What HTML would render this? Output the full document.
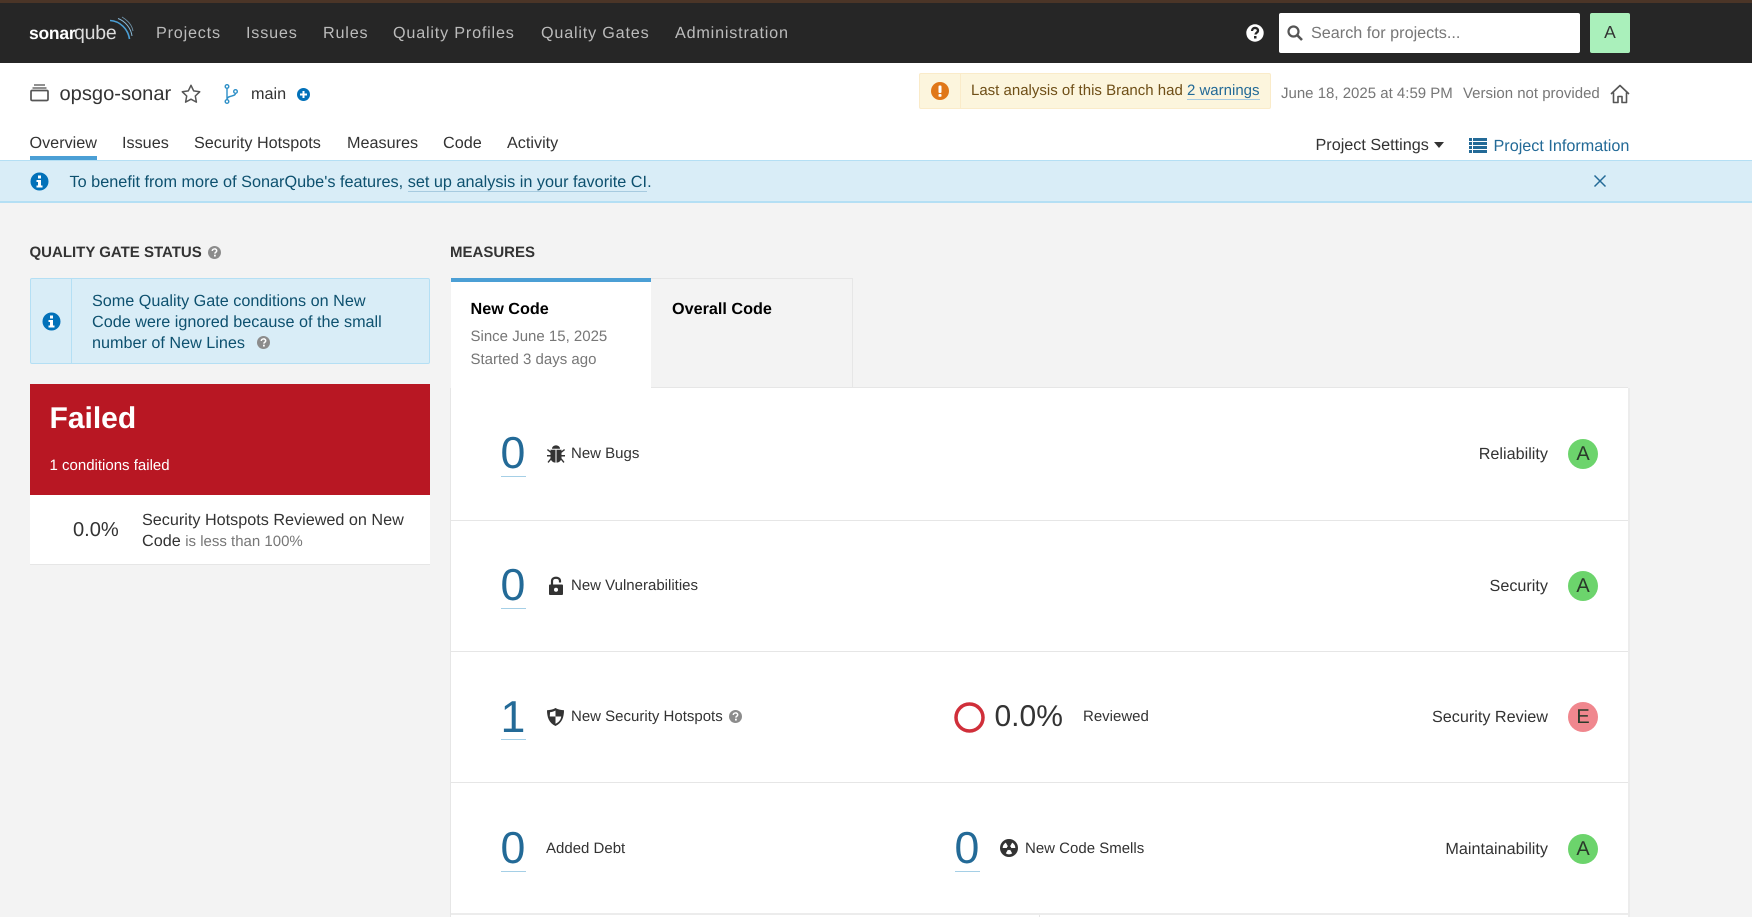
<!DOCTYPE html>
<html lang="en"><head><meta charset="utf-8"><title>opsgo-sonar</title>
<style>
html,body{margin:0;padding:0;width:1752px;height:917px;overflow:hidden;background:#f3f3f3}
body{position:relative;font-family:"Liberation Sans",sans-serif;color:#333;text-rendering:geometricPrecision}
.b{position:absolute;box-sizing:border-box}
.t{position:absolute;white-space:nowrap;line-height:24px;height:24px;font-size:16.2px}
.nav{color:#bbb;letter-spacing:.8px;top:21px;font-size:16.2px}
.tab{top:131px}
.u{border-bottom:1px solid #a7cbe0}
.num{font-size:44.7px;line-height:50px;height:50px;color:#236a97}
.ul{position:absolute;height:1px;width:25px;background:#a5cfe6}
.m{font-size:15px}
.rate{position:absolute;width:30px;height:30px;border-radius:50%;background:#6cd46c;left:1568px;text-align:center;line-height:30px;font-size:20px;color:#2a3a2a}
.h{position:absolute;background:#e6e6e6;height:1px;left:451px;width:1177px}
svg{position:absolute;overflow:visible}
</style></head><body>
<div class="b" style="left:0;top:0;width:1752px;height:3px;background:#4b3527"></div>
<div class="b" style="left:0;top:3px;width:1752px;height:60px;background:#262626"></div>
<div class="b" style="left:0;top:63px;width:1752px;height:97px;background:#fff"></div>

<!-- logo -->
<div class="t" style="left:29px;top:21px;font-size:17.5px;font-weight:bold;color:#fff;letter-spacing:-.25px">sonar</div>
<div class="t" style="left:74px;top:21px;font-size:19.5px;color:#ddd;letter-spacing:-.2px">qube</div>
<svg style="left:0;top:0" width="140" height="50" fill="none"><path d="M110 20.500C120 21 128 29 129.500 39" stroke="#4b9fd5" stroke-width="1.600"/><path d="M118 18.500C125 21 131 28 132 36" stroke="#8ab8d6" stroke-width="1"/><path d="M122 17C127 20 132 25 133 31" stroke="#6d8fa5" stroke-width=".9"/></svg>

<div class="t nav" style="left:156px">Projects</div>
<div class="t nav" style="left:246px">Issues</div>
<div class="t nav" style="left:323px">Rules</div>
<div class="t nav" style="left:393px">Quality Profiles</div>
<div class="t nav" style="left:541px">Quality Gates</div>
<div class="t nav" style="left:675px">Administration</div>

<svg style="left:1246px;top:24px" width="18" height="18" viewBox="0 0 18 18"><circle cx="9" cy="9" r="8.700" fill="#fff"/><path d="M6 7c0-4 6-4 6-.5 0 2.300-2.500 2.200-2.500 4" fill="none" stroke="#262626" stroke-width="2.300"/><rect x="8" y="12" width="2.500" height="2.500" fill="#262626"/></svg>
<div class="b" style="left:1279px;top:13px;width:301px;height:40px;background:#fff;border-radius:2px"></div>
<svg style="left:1287px;top:25px" width="16" height="16" viewBox="0 0 16 16" fill="none"><circle cx="6.500" cy="6.500" r="5" stroke="#555" stroke-width="2.200"/><path d="M10.500 10.500L15 15" stroke="#555" stroke-width="2.600"/></svg>
<div class="t" style="left:1311px;top:21px;color:#777">Search for projects...</div>
<div class="b" style="left:1590px;top:13px;width:40px;height:40px;background:#aaf0bb;border-radius:2px;text-align:center;line-height:39px;font-size:17.500px;color:#333">A</div>

<!-- project row -->
<svg style="left:30px;top:84px" width="19" height="17" viewBox="0 0 19 17" fill="none" stroke="#555"><path d="M4 1h11" stroke-width="1.300"/><path d="M2.500 4h14" stroke-width="1.300"/><rect x="1" y="6.500" width="17" height="10" rx="1.200" stroke-width="1.700"/></svg>
<div class="t" style="left:59.500px;top:82px;font-size:20.100px">opsgo-sonar</div>
<svg style="left:181px;top:84px" width="20" height="19" viewBox="0 0 20 19" fill="none"><path d="M10 1.300l2.700 5.600 6 .9-4.400 4.200 1.100 6.100L10 15.200l-5.400 2.900 1.100-6.100L1.300 7.800l6-.9z" stroke="#555" stroke-width="1.500" stroke-linejoin="round"/></svg>
<svg style="left:224px;top:84px" width="14" height="20" viewBox="0 0 14 20" fill="none" stroke="#2d8fc7" stroke-width="1.400"><circle cx="3" cy="2.500" r="1.800"/><circle cx="3" cy="17.500" r="1.800"/><circle cx="11.500" cy="7.500" r="1.800"/><path d="M3 4.500v11M3 15C4 11 11 13 11.500 9.500"/></svg>
<div class="t" style="left:251px;top:82px">main</div>
<svg style="left:297px;top:88px" width="13" height="13" viewBox="0 0 13 13"><circle cx="6.500" cy="6.500" r="6.500" fill="#0271b9"/><path d="M6.500 3v7M3 6.500h7" stroke="#fff" stroke-width="2"/></svg>

<!-- warning -->
<div class="b" style="left:919px;top:73px;width:352px;height:36px;background:#fcf5dd;border:1px solid #faebc9;border-radius:2px"></div>
<div class="b" style="left:960px;top:74px;width:1px;height:34px;background:#faebc9"></div>
<svg style="left:931px;top:82px" width="18" height="18" viewBox="0 0 18 18"><circle cx="9" cy="9" r="9" fill="#e07718"/><rect x="7.500" y="3.500" width="3" height="7.500" rx="1" fill="#fff"/><rect x="7.500" y="12" width="3" height="2.800" rx=".8" fill="#fff"/></svg>
<div class="t m" style="left:971px;top:79px;color:#6f4f17">Last analysis of this Branch had <span class="u" style="color:#236a97">2 warnings</span></div>
<div class="t m" style="left:1281px;top:82px;color:#777">June 18, 2025 at 4:59 PM</div>
<div class="t m" style="left:1463px;top:82px;color:#777">Version not provided</div>
<svg style="left:1610px;top:84px" width="20" height="20" viewBox="0 0 20 20" fill="none" stroke="#555" stroke-width="1.600"><path d="M1 10L10 1.500 19 10M3.500 8.500V18.500H8V12.500H12V18.500H16.500V8.500" stroke-linejoin="round"/></svg>

<!-- tabs -->
<div class="t tab" style="left:29.500px">Overview</div>
<div class="b" style="left:30px;top:156px;width:67px;height:4px;background:#4b9fd5"></div>
<div class="t tab" style="left:122px">Issues</div>
<div class="t tab" style="left:194px">Security Hotspots</div>
<div class="t tab" style="left:347px">Measures</div>
<div class="t tab" style="left:443px">Code</div>
<div class="t tab" style="left:507px">Activity</div>
<div class="t" style="left:1315.500px;top:133px">Project Settings</div>
<svg style="left:1434px;top:142px" width="10" height="6"><path d="M0 0h10L5 6z" fill="#333"/></svg>
<svg style="left:1469px;top:138px" width="18" height="15" viewBox="0 0 18 15" fill="#236a97"><path d="M0 0h3v3H0zM4 0h14v3H4zM0 4h3v3H0zM4 4h14v3H4zM0 8h3v3H0zM4 8h14v3H4zM0 12h3v3H0zM4 12h14v3H4z"/></svg>
<div class="t" style="left:1493.500px;top:134px;color:#236a97">Project Information</div>

<!-- banner -->
<div class="b" style="left:0;top:160px;width:1752px;height:43px;background:#d9edf7;border-top:1px solid #b4dff4;border-bottom:2px solid #b4dff4"></div>
<svg style="left:30px;top:172px" width="19" height="19" viewBox="0 0 19 19"><circle cx="9.500" cy="9.500" r="9" fill="#0271b9"/><rect x="8" y="3.500" width="3" height="3" fill="#fff"/><path d="M6.500 8h4.500v5.500h1.500v2h-6v-2H8V10H6.500z" fill="#fff"/></svg>
<div class="t" style="left:69.500px;top:170px;color:#0e516f;font-size:16.25px">To benefit from more of SonarQube's features, <span class="u" style="color:#0e516f">set up analysis in your favorite CI</span>.</div>
<svg style="left:1594px;top:175px" width="12" height="12" fill="none" stroke="#236a97" stroke-width="1.500"><path d="M.5.500l11 11M11.500.500l-11 11"/></svg>

<!-- QG -->
<div class="t m" style="left:29.500px;top:241px;font-weight:bold;color:#333">QUALITY GATE STATUS</div>
<svg style="left:208px;top:246px" width="13" height="13" viewBox="0 0 13 13"><circle cx="6.500" cy="6.500" r="6.500" fill="#8c8c8c"/><path d="M4.300 5c0-2.700 4.400-2.700 4.400-.3 0 1.600-1.800 1.500-1.800 2.900" fill="none" stroke="#fff" stroke-width="1.500"/><rect x="6" y="8.700" width="1.800" height="1.800" fill="#fff"/></svg>
<div class="t m" style="left:450px;top:241px;font-weight:bold;color:#333">MEASURES</div>

<div class="b" style="left:30px;top:278px;width:400px;height:86px;background:#d9edf7;border:1px solid #b4dff4;border-radius:2px"></div>
<div class="b" style="left:71px;top:279px;width:1px;height:84px;background:#b4dff4"></div>
<svg style="left:42px;top:312px" width="19" height="19" viewBox="0 0 19 19"><circle cx="9.500" cy="9.500" r="9" fill="#0271b9"/><rect x="8" y="3.500" width="3" height="3" fill="#fff"/><path d="M6.500 8h4.500v5.500h1.500v2h-6v-2H8V10H6.500z" fill="#fff"/></svg>
<div class="t" style="left:92px;top:289px;color:#0e516f">Some Quality Gate conditions on New</div>
<div class="t" style="left:92px;top:310px;color:#0e516f">Code were ignored because of the small</div>
<div class="t" style="left:92px;top:331px;color:#0e516f">number of New Lines</div>
<svg style="left:257px;top:336px" width="13" height="13" viewBox="0 0 13 13"><circle cx="6.500" cy="6.500" r="6.500" fill="#8c8c8c"/><path d="M4.300 5c0-2.700 4.400-2.700 4.400-.3 0 1.600-1.800 1.500-1.800 2.900" fill="none" stroke="#fff" stroke-width="1.500"/><rect x="6" y="8.700" width="1.800" height="1.800" fill="#fff"/></svg>

<div class="b" style="left:30px;top:384px;width:400px;height:111px;background:#b81723"></div>
<div class="t" style="left:49.500px;top:399px;height:40px;line-height:40px;font-size:30px;font-weight:bold;color:#fff">Failed</div>
<div class="t m" style="left:49.500px;top:454px;color:#fff">1 conditions failed</div>
<div class="b" style="left:30px;top:495px;width:400px;height:70px;background:#fff;border-bottom:1px solid #e6e6e6"></div>
<div class="t" style="left:73px;top:518px;font-size:20.100px">0.0%</div>
<div class="t" style="left:142px;top:508px">Security Hotspots Reviewed on New</div>
<div class="t" style="left:142px;top:529px">Code <span style="font-size:15px;color:#777">is less than 100%</span></div>

<!-- measure tabs -->
<div class="b" style="left:651px;top:278px;width:202px;height:110px;background:#f3f3f3;border:1px solid #e6e6e6;border-left:0"></div>
<div class="b" style="left:451px;top:278px;width:200px;height:110px;background:#fff;border-top:4px solid #4b9fd5"></div>
<div class="t" style="left:470.500px;top:297px;font-weight:bold;color:#000">New Code</div>
<div class="t" style="left:672px;top:297px;font-weight:bold;color:#000">Overall Code</div>
<div class="t m" style="left:470.500px;top:325px;color:#777">Since June 15, 2025</div>
<div class="t m" style="left:470.500px;top:348px;color:#777">Started 3 days ago</div>

<!-- panel -->
<div class="b" style="left:450px;top:388px;width:1180px;height:529px;background:#fff;border-left:1px solid #e6e6e6;border-right:2px solid #ececec"></div>
<div class="b" style="left:651px;top:387px;width:977px;height:1px;background:#e6e6e6"></div>
<div class="h" style="top:520px"></div>
<div class="h" style="top:651px"></div>
<div class="h" style="top:782px"></div>
<div class="h" style="top:913px;height:2px;background:#ececec"></div>
<div class="b" style="left:1039px;top:915px;width:1px;height:2px;background:#e6e6e6"></div>

<div class="t num" style="left:500.500px;top:429px">0</div><div class="ul" style="left:501px;top:476px"></div>
<svg style="left:547px;top:445px" width="18" height="18" viewBox="0 0 18 18" fill="#333"><path d="M5 3.800C5 1.500 7 .4 9 .4s4 1.100 4 3.400z"/><path d="M3.500 4.700h5v12.900C5.600 17.600 3.500 15.500 3.500 12.500zM9.500 4.700h5v7.800c0 3-2.100 5.100-5 5.100z"/><path d="M0 10h4v1.500H0zM14 10h4v1.500h-4zM.8 4l3.600 2.800-.9 1.100L0 5.100zM17.200 4l-3.600 2.800.9 1.100L18 5.100zM.5 17l3-3.800 1.100.9-3 3.800zM17.500 17l-3-3.800-1.100.9 3 3.800z"/></svg>
<div class="t m" style="left:571px;top:442px">New Bugs</div>
<div class="t" style="right:204px;top:442px">Reliability</div>
<div class="rate" style="top:439px">A</div>

<div class="t num" style="left:500.500px;top:561px">0</div><div class="ul" style="left:501px;top:608px"></div>
<svg style="left:549px;top:577px" width="14" height="18" viewBox="0 0 14 18" fill="#333"><path d="M1 7.500h12a1 1 0 0 1 1 1v8.500a1 1 0 0 1-1 1H1a1 1 0 0 1-1-1V8.500a1 1 0 0 1 1-1z"/><path d="M3 8.500V4C3-.3 11-.3 11 4V5.500" fill="none" stroke="#333" stroke-width="2.200"/><circle cx="7" cy="12.800" r="2" fill="#fff"/></svg>
<div class="t m" style="left:571px;top:574px">New Vulnerabilities</div>
<div class="t" style="right:204px;top:574px">Security</div>
<div class="rate" style="top:571px">A</div>

<div class="t num" style="left:500.500px;top:693px">1</div><div class="ul" style="left:501px;top:739px"></div>
<svg style="left:547px;top:708px" width="17" height="18" viewBox="0 0 17 18"><path d="M8.500 0C11 1.500 14 2 17 2.200 17 9 15 15 8.500 18 2 15 0 9 0 2.200 3 2 6 1.500 8.500 0z" fill="#333"/><path d="M8.500 2.500V8.500H2.800C3 5.500 3 5 3 4.200 5 4 7 3.400 8.500 2.500zM8.500 8.500H14.200C14 11.500 12 14.200 8.500 15.800z" fill="#fff"/></svg>
<div class="t m" style="left:571px;top:705px">New Security Hotspots</div>
<svg style="left:729px;top:710px" width="13" height="13" viewBox="0 0 13 13"><circle cx="6.500" cy="6.500" r="6.500" fill="#8c8c8c"/><path d="M4.300 5c0-2.700 4.400-2.700 4.400-.3 0 1.600-1.800 1.500-1.800 2.900" fill="none" stroke="#fff" stroke-width="1.500"/><rect x="6" y="8.700" width="1.800" height="1.800" fill="#fff"/></svg>
<svg style="left:954px;top:702px" width="31" height="31"><circle cx="15.500" cy="15.500" r="13.500" fill="none" stroke="#d02f3a" stroke-width="3.500"/></svg>
<div class="t" style="left:994.500px;top:701px;height:32px;line-height:32px;font-size:30px">0.0%</div>
<div class="t m" style="left:1083px;top:705px">Reviewed</div>
<div class="t" style="right:204px;top:705px">Security Review</div>
<div class="rate" style="top:702px;background:#f0878e">E</div>

<div class="t num" style="left:500.500px;top:824px">0</div><div class="ul" style="left:501px;top:871px"></div>
<div class="t m" style="left:546px;top:837px">Added Debt</div>
<div class="t num" style="left:954.500px;top:824px">0</div><div class="ul" style="left:955px;top:871px"></div>
<svg style="left:1000px;top:839px" width="18" height="18" viewBox="0 0 18 18"><circle cx="9" cy="9" r="9" fill="#333"/><path d="M5.800 3.600L7.900 7.200A2.200 2.200 0 0 0 6.800 9H2.700A6.300 6.300 0 0 1 5.800 3.600zM12.200 3.600L10.100 7.200A2.200 2.200 0 0 1 11.200 9H15.300A6.300 6.300 0 0 0 12.200 3.600zM5.800 14.400L7.900 10.800A2.200 2.200 0 0 0 10.100 10.800L12.200 14.400A6.300 6.300 0 0 1 5.800 14.400z" fill="#fff"/></svg>
<div class="t m" style="left:1025px;top:837px">New Code Smells</div>
<div class="t" style="right:204px;top:837px">Maintainability</div>
<div class="rate" style="top:834px">A</div>
</body></html>
